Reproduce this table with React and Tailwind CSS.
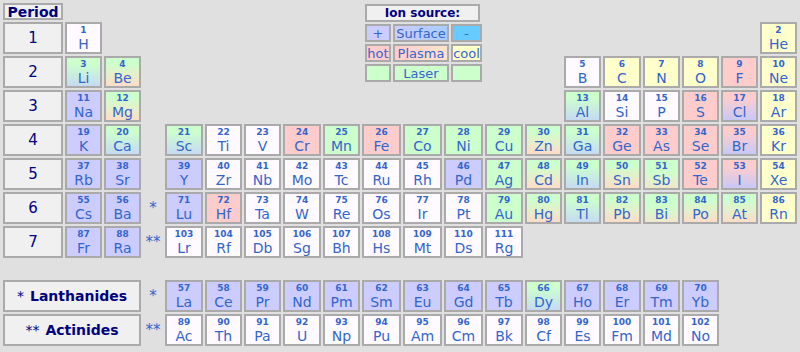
// Periodic table with ion-source legend
const BG = {
  w: 'bg-[#fffaff]',
  y: 'bg-[#ffffcc]',
  r: 'bg-[#ffcccc]',
  g: 'bg-[#ccffcc]',
  b: 'bg-[#ccccff]',
  gb: 'bg-linear-to-b from-[#ccffcc] from-20% to-[#c6daf2]',
  gp: 'bg-linear-to-b from-[#ccffcc] from-20% to-[#fcdcc8]',
  gq: 'bg-linear-to-b from-[#ccffcc] from-40% to-[#f0e6cc]',
  rb: 'bg-linear-to-b from-[#ffcccc] from-20% to-[#c8c8f6]',
};

// [number, symbol, group, colour]
const PERIODS = [
  [[1, 'H', 1, 'w'], [2, 'He', 18, 'y']],
  [[3, 'Li', 1, 'gb'], [4, 'Be', 2, 'gp'], [5, 'B', 13, 'w'], [6, 'C', 14, 'y'], [7, 'N', 15, 'y'], [8, 'O', 16, 'y'], [9, 'F', 17, 'r'], [10, 'Ne', 18, 'y']],
  [[11, 'Na', 1, 'b'], [12, 'Mg', 2, 'gp'], [13, 'Al', 13, 'gb'], [14, 'Si', 14, 'w'], [15, 'P', 15, 'w'], [16, 'S', 16, 'r'], [17, 'Cl', 17, 'rb'], [18, 'Ar', 18, 'y']],
  [[19, 'K', 1, 'b'], [20, 'Ca', 2, 'gb'], [21, 'Sc', 3, 'gb'], [22, 'Ti', 4, 'w'], [23, 'V', 5, 'w'], [24, 'Cr', 6, 'r'], [25, 'Mn', 7, 'g'], [26, 'Fe', 8, 'r'], [27, 'Co', 9, 'g'], [28, 'Ni', 10, 'g'], [29, 'Cu', 11, 'g'], [30, 'Zn', 12, 'gp'], [31, 'Ga', 13, 'gb'], [32, 'Ge', 14, 'r'], [33, 'As', 15, 'r'], [34, 'Se', 16, 'r'], [35, 'Br', 17, 'rb'], [36, 'Kr', 18, 'y']],
  [[37, 'Rb', 1, 'b'], [38, 'Sr', 2, 'b'], [39, 'Y', 3, 'b'], [40, 'Zr', 4, 'w'], [41, 'Nb', 5, 'w'], [42, 'Mo', 6, 'w'], [43, 'Tc', 7, 'w'], [44, 'Ru', 8, 'w'], [45, 'Rh', 9, 'w'], [46, 'Pd', 10, 'b'], [47, 'Ag', 11, 'g'], [48, 'Cd', 12, 'gp'], [49, 'In', 13, 'gb'], [50, 'Sn', 14, 'gp'], [51, 'Sb', 15, 'gq'], [52, 'Te', 16, 'r'], [53, 'I', 17, 'rb'], [54, 'Xe', 18, 'y']],
  [[55, 'Cs', 1, 'b'], [56, 'Ba', 2, 'b'], [71, 'Lu', 3, 'b'], [72, 'Hf', 4, 'r'], [73, 'Ta', 5, 'w'], [74, 'W', 6, 'w'], [75, 'Re', 7, 'w'], [76, 'Os', 8, 'w'], [77, 'Ir', 9, 'w'], [78, 'Pt', 10, 'w'], [79, 'Au', 11, 'g'], [80, 'Hg', 12, 'gp'], [81, 'Tl', 13, 'gb'], [82, 'Pb', 14, 'gp'], [83, 'Bi', 15, 'gq'], [84, 'Po', 16, 'gp'], [85, 'At', 17, 'gp'], [86, 'Rn', 18, 'y']],
  [[87, 'Fr', 1, 'b'], [88, 'Ra', 2, 'b'], [103, 'Lr', 3, 'w'], [104, 'Rf', 4, 'w'], [105, 'Db', 5, 'w'], [106, 'Sg', 6, 'w'], [107, 'Bh', 7, 'w'], [108, 'Hs', 8, 'w'], [109, 'Mt', 9, 'w'], [110, 'Ds', 10, 'w'], [111, 'Rg', 11, 'w']],
];

const LANTH = ['La', 'Ce', 'Pr', 'Nd', 'Pm', 'Sm', 'Eu', 'Gd', 'Tb', 'Dy', 'Ho', 'Er', 'Tm', 'Yb'];
const ACT = ['Ac', 'Th', 'Pa', 'U', 'Np', 'Pu', 'Am', 'Cm', 'Bk', 'Cf', 'Es', 'Fm', 'Md', 'No'];

// grid column for a group (period col, g1, g2, star col, g3..g18)
const colOf = (g) => (g <= 2 ? g + 1 : g + 2);

function Cell({ n, s, c, row, col }) {
  return (
    <div
      style={{ gridRow: row, gridColumn: col }}
      className={`flex flex-col items-center border-2 border-[#aaaaaa] text-[#3366cc] ${BG[c]}`}
    >
      <span className="mt-[1px] text-[9px] leading-[11px] font-bold">{n}</span>
      <span className="text-[14px] leading-[16px]">{s}</span>
    </div>
  );
}

function LegendBox({ className, children }) {
  return (
    <div className={`flex h-[18px] items-center justify-center border-2 border-[#aaaaaa] text-[13px] leading-none text-[#3366cc] ${className}`}>
      {children}
    </div>
  );
}

function Legend() {
  return (
    <div className="col-start-10 col-span-3 row-start-1 row-span-3 pl-[3px] pt-[1px]">
      <div className="flex h-[18px] w-[115px] items-center justify-center border-2 border-[#aaaaaa] bg-[#f0f0f0] text-[12px] font-bold leading-none text-[#000080]">
        Ion source:
      </div>
      <div className="mt-[2px] grid grid-cols-[26px_56px_31px] gap-[2px]">
        <LegendBox className="bg-[#ccccff]">+</LegendBox>
        <LegendBox className="bg-linear-to-r from-[#ccccff] to-[#a8ccff]">Surface</LegendBox>
        <LegendBox className="bg-[#66ccff]">-</LegendBox>
        <LegendBox className="bg-[#ffcccc]">hot</LegendBox>
        <LegendBox className="bg-linear-to-r from-[#ffcccc] to-[#ffe4cc]">Plasma</LegendBox>
        <LegendBox className="bg-[#ffffcc]">cool</LegendBox>
        <LegendBox className="bg-[#ccffcc]" />
        <LegendBox className="bg-[#ccffcc]">Laser</LegendBox>
        <LegendBox className="bg-[#ccffcc]" />
      </div>
    </div>
  );
}

const Star = ({ row, children }) => (
  <div style={{ gridRow: row }} className="col-start-4 flex items-center justify-center text-[15px] text-[#3366cc]">
    {children}
  </div>
);

export default function App() {
  return (
    <div className="h-[352px] w-[800px] bg-[#e0e0e0] p-[3px] font-['DejaVu_Sans',Verdana,sans-serif]">
      <div className="grid grid-cols-[60px_37px_37px_20px_38px_37px_37px_38px_37px_39px_39px_39px_38px_37px_37px_38px_37px_37px_37px_37px] grid-rows-[17px_repeat(7,32px)_18px_32px_32px] gap-[2px]">
        <div className="col-start-1 row-start-1 flex items-center justify-center border-2 border-[#aaaaaa] bg-[#f0f0f0] text-[14px] font-bold leading-none text-[#000080]">
          Period
        </div>
        <Legend />

        {PERIODS.map((els, i) => (
          <div key={'p' + i} style={{ gridRow: i + 2 }} className="col-start-1 flex items-center justify-center border-2 border-[#aaaaaa] bg-[#f0f0f0] text-[15px] text-[#000080]">
            {i + 1}
          </div>
        ))}

        {PERIODS.map((els, i) =>
          els.map(([n, s, g, c]) => <Cell key={n} n={n} s={s} c={c} row={i + 2} col={colOf(g)} />)
        )}

        <Star row={7}>*</Star>
        <Star row={8}>**</Star>

        <div className="col-start-1 col-span-3 row-start-10 flex items-center justify-center gap-[6px] border-2 border-[#aaaaaa] bg-[#f0f0f0] text-[14px] text-[#000080]">
          <span>*</span><span className="font-bold">Lanthanides</span>
        </div>
        <div className="col-start-1 col-span-3 row-start-11 flex items-center justify-center gap-[6px] border-2 border-[#aaaaaa] bg-[#f0f0f0] text-[14px] text-[#000080]">
          <span>**</span><span className="font-bold">Actinides</span>
        </div>
        <Star row={10}>*</Star>
        <Star row={11}>**</Star>

        {LANTH.map((s, i) => (
          <Cell key={s} n={57 + i} s={s} c={s === 'Dy' ? 'gb' : 'b'} row={10} col={colOf(3 + i)} />
        ))}
        {ACT.map((s, i) => (
          <Cell key={s} n={89 + i} s={s} c="w" row={11} col={colOf(3 + i)} />
        ))}
      </div>
    </div>
  );
}
